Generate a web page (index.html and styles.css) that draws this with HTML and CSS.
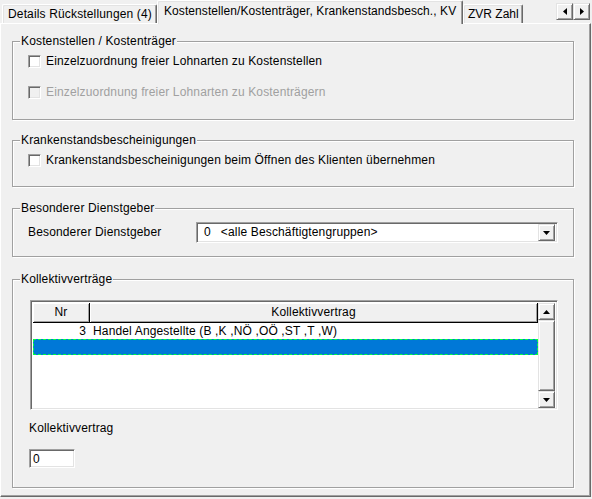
FILE: index.html
```html
<!DOCTYPE html>
<html lang="de">
<head>
<meta charset="utf-8">
<title>Kostenstellen / Krankenstand / KV</title>
<link rel="stylesheet" href="styles.css">
</head>
<body>
<div class="tabstrip">
  <div class="tab tab-first">Details Rückstellungen (4)</div>
  <div class="tab tab-active">Kostenstellen/Kostenträger, Krankenstandsbesch., KV</div>
  <div class="tab tab-zvr">ZVR Zahl</div>
  <div class="tab-scroll">
    <div class="btn3d scroll-btn">
      <svg width="4" height="7" viewBox="0 0 4 7"><polygon points="4,0 4,7 0,3.5" fill="#000"/></svg>
    </div>
    <div class="btn3d scroll-btn">
      <svg width="4" height="7" viewBox="0 0 4 7"><polygon points="0,0 0,7 4,3.5" fill="#000"/></svg>
    </div>
  </div>
</div>

<div class="panel">
  <fieldset class="group group-kst">
    <legend>Kostenstellen / Kostenträger</legend>
    <div class="group-body body-kst">
      <div class="check"><span class="box"></span><span>Einzelzuordnung freier Lohnarten zu Kostenstellen</span></div>
      <div class="check check-disabled"><span class="box"></span><span>Einzelzuordnung freier Lohnarten zu Kostenträgern</span></div>
    </div>
  </fieldset>

  <fieldset class="group group-ks">
    <legend>Krankenstandsbescheinigungen</legend>
    <div class="group-body body-ks">
      <div class="check"><span class="box"></span><span>Krankenstandsbescheinigungen beim Öffnen des Klienten übernehmen</span></div>
    </div>
  </fieldset>

  <fieldset class="group group-dg">
    <legend>Besonderer Dienstgeber</legend>
    <div class="group-body body-dg">
      <span class="dg-label">Besonderer Dienstgeber</span>
      <div class="combo">
        <span class="combo-value"><span>0</span><span class="combo-text">&lt;alle Beschäftigtengruppen&gt;</span></span>
        <div class="btn3d combo-btn">
          <svg width="7" height="4" viewBox="0 0 7 4"><polygon points="0,0 7,0 3.5,4" fill="#000"/></svg>
        </div>
      </div>
    </div>
  </fieldset>

  <fieldset class="group group-kv">
    <legend>Kollektivverträge</legend>
    <div class="group-body body-kv">
      <div class="list">
        <div class="grid">
          <div class="grid-head">
            <div class="hcell col-nr">Nr</div>
            <div class="hcell col-kv">Kollektivvertrag</div>
          </div>
          <div class="grid-row">
            <div class="cell col-nr num">3</div>
            <div class="cell col-kv">Handel Angestellte (B ,K ,NÖ ,OÖ ,ST ,T ,W)</div>
          </div>
          <div class="grid-row row-selected"></div>
        </div>
        <div class="vscroll">
          <div class="btn3d sb-btn">
            <svg width="7" height="4" viewBox="0 0 7 4"><polygon points="0,4 7,4 3.5,0" fill="#000"/></svg>
          </div>
          <div class="btn3d sb-thumb"></div>
          <div class="sb-track"></div>
          <div class="btn3d sb-btn">
            <svg width="7" height="4" viewBox="0 0 7 4"><polygon points="0,0 7,0 3.5,4" fill="#000"/></svg>
          </div>
        </div>
      </div>
      <div class="kv-label">Kollektivvertrag</div>
      <div class="edit">0</div>
    </div>
  </fieldset>
</div>
</body>
</html>
```
FILE: styles.css
```css
html, body {
  margin: 0;
  padding: 0;
}

body {
  width: 592px;
  height: 499px;
  overflow: hidden;
  background: #f0f0f0;
  color: #000;
  font-family: "Liberation Sans", Arial, sans-serif;
  font-size: 12px;
  letter-spacing: 0.15px;
  line-height: 13px;
}

/* ---------- raised 3D button face ---------- */
.btn3d {
  box-sizing: border-box;
  background: #f0f0f0;
  border: 1px solid;
  border-color: #e3e3e3 #696969 #696969 #e3e3e3;
  box-shadow: inset 1px 1px #fff, inset -1px -1px #a0a0a0;
  display: flex;
  align-items: center;
  justify-content: center;
}

/* ---------- tab strip ---------- */
.tabstrip {
  display: flex;
  align-items: flex-end;
  height: 23px;
  padding-left: 2px;
}

.tab {
  box-sizing: border-box;
  height: 19px;
  border-top: 1px solid #fff;
  border-left: 1px solid #fff;
  border-right: 1px solid #696969;
  box-shadow: inset -1px 0 #a0a0a0, inset 1px 1px #e3e3e3;
  border-radius: 2px 2px 0 0;
  white-space: nowrap;
  padding: 3px 0 0 5px;
}

.tab-first {
  width: 155px;
}

.tab-active {
  position: relative;
  z-index: 1;
  width: 306px;
  height: 24px;
  margin-bottom: -1px;
  background: #f0f0f0;
  padding: 4px 0 0 6px;
  letter-spacing: 0.08px;
}

.tab-zvr {
  width: 60px;
  padding-left: 4px;
  letter-spacing: 0;
}

.tab-scroll {
  display: flex;
  align-self: flex-start;
  margin: 3px 2px 0 auto;
}

.scroll-btn {
  width: 17px;
  height: 17px;
}

/* ---------- tab page ---------- */
.panel {
  box-sizing: border-box;
  width: 591px;
  height: 474px;
  border-top: 1px solid #fff;
  border-left: 1px solid #fff;
  border-right: 1px solid #696969;
  border-bottom: 1px solid #696969;
  box-shadow: inset -1px -1px #a0a0a0;
  padding: 11px 16px 0 11px;
}

/* ---------- group boxes ---------- */
.group {
  margin: 0;
  padding: 0;
  min-width: 0;
  border: 1px solid #a0a0a0;
  box-shadow: inset 1px 1px #fff, 1px 1px #fff;
}

.group legend {
  margin-left: 7px;
  padding: 0 1px;
  line-height: 13px;
  background: #f0f0f0;
}

.group + .group {
  margin-top: 14px;
}

.group-ks + .group-dg {
  margin-top: 15px;
}

.group-dg + .group-kv {
  margin-top: 16px;
}

.body-kst {
  padding: 5px 0 19px 15px;
  display: flex;
  flex-direction: column;
  gap: 15px;
}

.body-ks {
  padding: 5px 0 18px 15px;
}

.body-dg {
  display: flex;
  align-items: center;
  padding: 7px 14px 13px 0;
}

.body-kv {
  padding: 14px 0 19px 0;
}

/* ---------- check boxes ---------- */
.check {
  display: flex;
  align-items: center;
  height: 16px;
  gap: 5px;
  white-space: nowrap;
}

.box {
  box-sizing: border-box;
  width: 13px;
  height: 13px;
  flex: none;
  background: #fff;
  border: 1px solid;
  border-color: #a0a0a0 #fff #fff #a0a0a0;
  box-shadow: inset 1px 1px #696969, inset -1px -1px #e3e3e3;
}

.check-disabled {
  color: #a0a0a0;
}

.check-disabled .box {
  background: #f0f0f0;
}

/* ---------- sunken field ---------- */
.combo,
.list,
.edit {
  box-sizing: border-box;
  background: #fff;
  border: 1px solid;
  border-color: #a0a0a0 #fff #fff #a0a0a0;
  box-shadow: inset 1px 1px #696969, inset -1px -1px #e3e3e3;
}

/* ---------- Dienstgeber combo ---------- */
.dg-label {
  width: 183px;
  padding-left: 15px;
  box-sizing: border-box;
  flex: none;
  white-space: nowrap;
}

.combo {
  width: 362px;
  height: 21px;
  display: flex;
  align-items: center;
  padding: 2px;
}

.combo-value {
  flex: 1;
  padding-left: 5px;
  white-space: nowrap;
}

.combo-text {
  margin-left: 10px;
}

.combo-btn {
  width: 17px;
  height: 17px;
}

/* ---------- Kollektivvertrag list ---------- */
.list {
  margin-left: 17px;
  width: 528px;
  height: 110px;
  display: flex;
  padding: 2px;
}

.grid {
  flex: 1;
  display: flex;
  flex-direction: column;
}

.grid-head {
  display: flex;
  height: 20px;
}

.hcell {
  box-sizing: border-box;
  height: 20px;
  background: #f0f0f0;
  border-right: 1px solid #000;
  border-bottom: 1px solid #000;
  box-shadow: inset 1px 1px #fff, inset -1px -1px #a0a0a0;
  text-align: center;
  line-height: 18px;
}

.col-nr {
  width: 57px;
  flex: none;
}

.col-kv {
  flex: 1;
}

.grid-row {
  display: flex;
  height: 16px;
  line-height: 16px;
  white-space: nowrap;
}

.cell.num {
  text-align: right;
  padding-right: 4px;
  box-sizing: border-box;
}

.cell.col-kv {
  padding-left: 3px;
}

.row-selected {
  box-sizing: border-box;
  background: #0078d7;
  border: 1px dashed #00ff40;
}

.vscroll {
  width: 17px;
  flex: none;
  display: flex;
  flex-direction: column;
  background: #f0f0f0;
}

.sb-btn {
  height: 17px;
  flex: none;
}

.sb-thumb {
  height: 71px;
  flex: none;
}

.sb-track {
  flex: 1;
}

/* ---------- KV number edit ---------- */
.kv-label {
  margin: 12px 0 0 16px;
  line-height: 13px;
}

.edit {
  margin: 14px 0 0 16px;
  width: 46px;
  height: 19px;
  padding: 2px 3px;
  line-height: 15px;
}
```
